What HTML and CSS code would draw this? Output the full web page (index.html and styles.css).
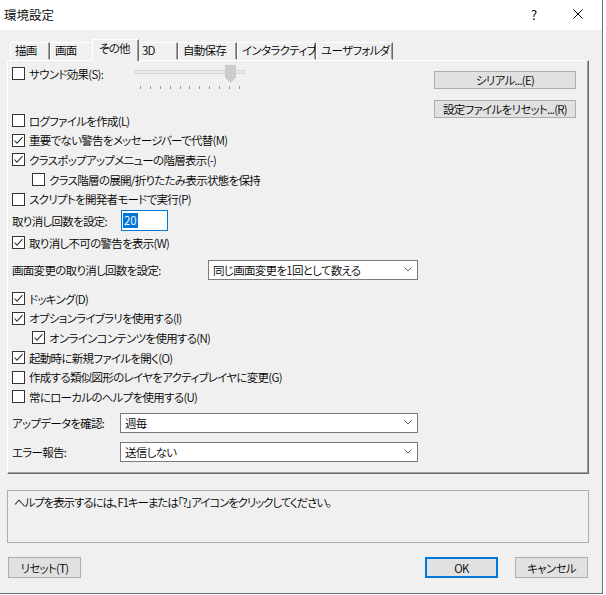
FILE: index.html
```html
<!DOCTYPE html>
<html lang="ja">
<head>
    <meta charset="UTF-8">
    <meta name="viewport" content="width=device-width, initial-scale=1.0">
    <title>環境設定</title>
    <link rel="stylesheet" href="styles.css">
</head>
<body>
    <div class="window">
        <div class="titlebar">
            <span class="title">環境設定</span>
            <span class="caption-btn">?</span>
            <span class="caption-btn">
                <svg viewBox="0 0 10 10" width="10" height="10">
                    <path d="M0.5 0.5L9.5 9.5M9.5 0.5L0.5 9.5"/>
                </svg>
            </span>
        </div>

        <div class="content">
            <div class="tabs">
                <div class="tab w-draw">描画</div>
                <div class="tab w-screen">画面</div>
                <div class="tab w-other active">その他</div>
                <div class="tab w-3d">3D</div>
                <div class="tab w-auto">自動保存</div>
                <div class="tab w-inter">インタラクティブ</div>
                <div class="tab w-user">ユーザフォルダ</div>
            </div>

            <div class="panel">
                <div class="top">
                    <div class="sound">
                        <div class="row sound-label">
                            <span class="cb"></span>
                            <span>サウンド効果(S):</span>
                        </div>
                        <div class="slider">
                            <div class="track"></div>
                            <div class="thumb"></div>
                            <div class="ticks">
                                <i></i><i></i><i></i><i></i><i></i><i></i><i></i><i></i><i></i><i></i><i></i>
                            </div>
                        </div>
                    </div>
                    <div class="side-btns">
                        <button class="btn wide">シリアル...(E)</button>
                        <button class="btn wide">設定ファイルをリセット...(R)</button>
                    </div>
                </div>

                <div class="row"><span class="cb"></span><span>ログファイルを作成(L)</span></div>
                <div class="row"><span class="cb"><svg viewBox="0 0 11 11"><polyline points="1.5,5.5 4,8.2 9.5,2.2"/></svg></span><span>重要でない警告をメッセージバーで代替(M)</span></div>
                <div class="row"><span class="cb"><svg viewBox="0 0 11 11"><polyline points="1.5,5.5 4,8.2 9.5,2.2"/></svg></span><span>クラスポップアップメニューの階層表示(-)</span></div>
                <div class="row sub"><span class="cb"></span><span>クラス階層の展開/折りたたみ表示状態を保持</span></div>
                <div class="row"><span class="cb"></span><span>スクリプトを開発者モードで実行(P)</span></div>

                <div class="undo-row">
                    <span class="undo-label">取り消し回数を設定:</span>
                    <div class="num"><span>20</span></div>
                </div>

                <div class="row"><span class="cb"><svg viewBox="0 0 11 11"><polyline points="1.5,5.5 4,8.2 9.5,2.2"/></svg></span><span>取り消し不可の警告を表示(W)</span></div>

                <div class="select-row first">
                    <span class="select-label long">画面変更の取り消し回数を設定:</span>
                    <div class="dropdown short">
                        <span>同じ画面変更を1回として数える</span>
                        <svg viewBox="0 0 8 5" width="8" height="5"><polyline points="0.5,0.5 4,4 7.5,0.5"/></svg>
                    </div>
                </div>

                <div class="row"><span class="cb"><svg viewBox="0 0 11 11"><polyline points="1.5,5.5 4,8.2 9.5,2.2"/></svg></span><span>ドッキング(D)</span></div>
                <div class="row"><span class="cb"><svg viewBox="0 0 11 11"><polyline points="1.5,5.5 4,8.2 9.5,2.2"/></svg></span><span>オプションライブラリを使用する(I)</span></div>
                <div class="row sub"><span class="cb"><svg viewBox="0 0 11 11"><polyline points="1.5,5.5 4,8.2 9.5,2.2"/></svg></span><span>オンラインコンテンツを使用する(N)</span></div>
                <div class="row"><span class="cb"><svg viewBox="0 0 11 11"><polyline points="1.5,5.5 4,8.2 9.5,2.2"/></svg></span><span>起動時に新規ファイルを開く(O)</span></div>
                <div class="row"><span class="cb"></span><span>作成する類似図形のレイヤをアクティブレイヤに変更(G)</span></div>
                <div class="row"><span class="cb"></span><span>常にローカルのヘルプを使用する(U)</span></div>

                <div class="select-row update">
                    <span class="select-label">アップデータを確認:</span>
                    <div class="dropdown">
                        <span>週毎</span>
                        <svg viewBox="0 0 8 5" width="8" height="5"><polyline points="0.5,0.5 4,4 7.5,0.5"/></svg>
                    </div>
                </div>
                <div class="select-row error">
                    <span class="select-label">エラー報告:</span>
                    <div class="dropdown">
                        <span>送信しない</span>
                        <svg viewBox="0 0 8 5" width="8" height="5"><polyline points="0.5,0.5 4,4 7.5,0.5"/></svg>
                    </div>
                </div>
            </div>

            <div class="helpbox">ヘルプを表示するには、F1キーまたは「?」アイコンをクリックしてください。</div>

            <div class="footer">
                <button class="btn">リセット(T)</button>
                <button class="btn ok">OK</button>
                <button class="btn">キャンセル</button>
            </div>
        </div>
    </div>
</body>
</html>
```

FILE: styles.css
```css
* {
    box-sizing: border-box;
    margin: 0;
    padding: 0;
}
body {
    background-color: #fff;
    font-family: "Noto Sans CJK JP", "Noto Sans", sans-serif;
    font-size: 11.5px;
    font-weight: 350;
    letter-spacing: -0.7px;
    font-feature-settings: "palt";
    color: #000;
}
.window {
    width: 603px;
    height: 594px;
    background-color: #f0f0f0;
    border-right: 1px solid #707070;
    border-bottom: 1px solid #707070;
}
.titlebar {
    height: 30px;
    background-color: #fff;
    display: flex;
    align-items: center;
    padding: 0 2px 2px 4px;
}
.title {
    flex: 1;
    font-size: 12.5px;
    letter-spacing: 0;
}
.caption-btn {
    width: 44px;
    height: 28px;
    display: flex;
    align-items: center;
    justify-content: center;
    font-size: 13px;
    letter-spacing: 0;
}
.caption-btn svg {
    stroke: #000;
    stroke-width: 1;
    fill: none;
}
.content {
    padding: 9px 0 0 7px;
}

/* tabs */
.tabs {
    display: flex;
    height: 21px;
    padding-left: 3px;
    position: relative;
    z-index: 1;
}
.tab {
    margin-top: 3px;
    height: 18px;
    border: 1px solid;
    border-color: #fff #696969 transparent #fff;
    box-shadow: inset -1px 0 #a0a0a0;
    padding-left: 4px;
    line-height: 15px;
    white-space: nowrap;
}
.tab.active {
    margin: 0 -2px;
    height: 22px;
    padding: 1px 0 0 6px;
    background-color: #f0f0f0;
    border-bottom: none;
    position: relative;
    z-index: 2;
}
.w-draw { width: 40px; }
.w-screen { width: 44px; }
.w-other { width: 47px; }
.w-3d { width: 41px; }
.w-auto { width: 59px; }
.w-inter { width: 79px; }
.w-user { width: 77px; }

/* panel */
.panel {
    width: 582px;
    height: 414px;
    border: 1px solid;
    border-color: #fff #696969 #696969 #fff;
    box-shadow: inset -1px -1px #a0a0a0;
    padding: 3px 12px 0 4px;
}
.top {
    display: flex;
    height: 47px;
}
.sound {
    display: flex;
    align-items: flex-start;
}
.sound-label {
    width: 123px;
    height: 19px;
}
.slider {
    position: relative;
    width: 110px;
    height: 26px;
}
.track {
    position: absolute;
    left: 0;
    right: 0;
    top: 6px;
    height: 4px;
    background-color: #e7eaea;
    border: 1px solid #d6d6d6;
}
.thumb {
    position: absolute;
    left: 90px;
    top: 1px;
    width: 11px;
    height: 18px;
    background-color: #cccccc;
    clip-path: polygon(0 0, 100% 0, 100% 70%, 50% 100%, 0 70%);
}
.ticks {
    position: absolute;
    left: 5px;
    right: 5px;
    top: 22px;
    display: flex;
    justify-content: space-between;
}
.ticks i {
    width: 1px;
    height: 3px;
    background-color: #9a9a9a;
}
.side-btns {
    margin-left: auto;
    padding-top: 7px;
    display: flex;
    flex-direction: column;
    gap: 11px;
}

/* check rows */
.row {
    height: 19.6px;
    display: flex;
    align-items: center;
    gap: 4px;
    white-space: nowrap;
}
.row.sub {
    padding-left: 20px;
}
.cb {
    width: 13px;
    height: 13px;
    flex: none;
    border: 1px solid #333;
    background-color: #fff;
    display: flex;
}
.cb svg {
    width: 11px;
    height: 11px;
    stroke: #333;
    stroke-width: 1.1;
    fill: none;
}
.undo-row {
    height: 24px;
    display: flex;
    align-items: center;
}
.undo-label {
    width: 109px;
}
.num {
    width: 47px;
    height: 21px;
    border: 1px solid #0078d7;
    background-color: #fff;
    padding-left: 1px;
    display: flex;
    align-items: center;
}
.num span {
    background-color: #0078d7;
    color: #fff;
    line-height: 15px;
    padding: 0 1px;
    letter-spacing: 0;
}

/* dropdowns */
.select-row {
    display: flex;
    align-items: center;
    height: 20px;
}
.select-row.first {
    margin: 7.4px 0 9px;
}
.select-row.update {
    margin-top: 6.4px;
}
.select-row.error {
    margin-top: 9px;
}
.select-label {
    width: 108px;
}
.select-label.long {
    width: 196px;
}
.dropdown {
    width: 298px;
    height: 20px;
    border: 1px solid #7a7a7a;
    background-color: #fff;
    display: flex;
    align-items: center;
    justify-content: space-between;
    padding: 0 4px 0 4px;
}
.dropdown.short {
    width: 210px;
}
.dropdown svg {
    stroke: #606060;
    stroke-width: 1;
    fill: none;
    margin-right: 1px;
}

/* help + footer */
.helpbox {
    margin-top: 16px;
    width: 582px;
    height: 53px;
    border: 1px solid #adadad;
    padding: 3px 6px;
    line-height: 16px;
    letter-spacing: -1.1px;
}
.footer {
    margin-top: 14px;
    width: 582px;
    padding: 0 1px;
    display: flex;
    gap: 17px;
}
.btn {
    width: 73px;
    height: 21px;
    background-color: #e1e1e1;
    border: 1px solid #adadad;
    font: inherit;
    letter-spacing: inherit;
    color: #000;
    white-space: nowrap;
}
.btn.wide {
    width: 142px;
    height: 20px;
}
.btn.ok {
    margin-left: auto;
    border: 2px solid #0078d7;
}
```
